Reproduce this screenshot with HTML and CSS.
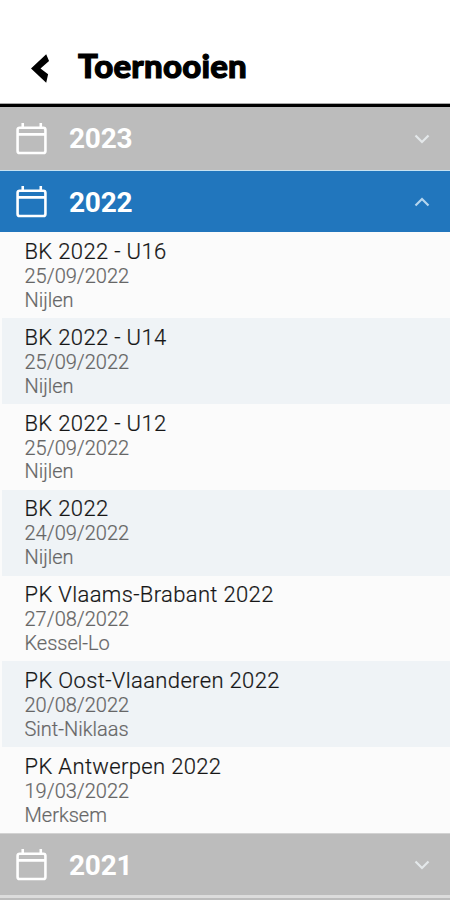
FILE: index.html
```html
<!DOCTYPE html>
<html lang="nl">
<head>
    <meta charset="utf-8">
    <title>Toernooien</title>
    <link rel="stylesheet" href="styles.css">
</head>
<body>
    <svg class="symbols">
        <symbol id="calendar" viewBox="0 0 30 32">
            <path d="M3.500 5.500h23a2 2 0 0 1 2 2V28a2 2 0 0 1-2 2h-23a2 2 0 0 1-2-2V7.500a2 2 0 0 1 2-2zM1.500 12h27M6.500 1v4M24 1v4"/>
        </symbol>
        <symbol id="chevron" viewBox="0 0 16 10">
            <path d="M1.500 1.500L8 8l6.500-6.500"/>
        </symbol>
    </svg>

    <header class="header">
        <svg class="back" viewBox="0 0 20 30"><path d="M16 0L0 15l16 15 2-9-8-6 9-8z"/></svg>
        <h1>Toernooien</h1>
    </header>

    <div class="year">
        <svg class="calendar"><use href="#calendar"/></svg>
        <span>2023</span>
        <svg class="chevron"><use href="#chevron"/></svg>
    </div>

    <div class="year open">
        <svg class="calendar"><use href="#calendar"/></svg>
        <span>2022</span>
        <svg class="chevron"><use href="#chevron"/></svg>
    </div>

    <ul class="list">
        <li>
            <h2>BK 2022 - U16</h2>
            <p>25/09/2022</p>
            <p>Nijlen</p>
        </li>
        <li>
            <h2>BK 2022 - U14</h2>
            <p>25/09/2022</p>
            <p>Nijlen</p>
        </li>
        <li>
            <h2>BK 2022 - U12</h2>
            <p>25/09/2022</p>
            <p>Nijlen</p>
        </li>
        <li>
            <h2>BK 2022</h2>
            <p>24/09/2022</p>
            <p>Nijlen</p>
        </li>
        <li>
            <h2>PK Vlaams-Brabant 2022</h2>
            <p>27/08/2022</p>
            <p>Kessel-Lo</p>
        </li>
        <li>
            <h2>PK Oost-Vlaanderen 2022</h2>
            <p>20/08/2022</p>
            <p>Sint-Niklaas</p>
        </li>
        <li>
            <h2>PK Antwerpen 2022</h2>
            <p>19/03/2022</p>
            <p>Merksem</p>
        </li>
    </ul>

    <div class="year last">
        <svg class="calendar"><use href="#calendar"/></svg>
        <span>2021</span>
        <svg class="chevron"><use href="#chevron"/></svg>
    </div>
</body>
</html>
```
FILE: styles.css
```css
* {
    box-sizing: border-box;
}

body {
    margin: 0;
    height: 900px;
    overflow: hidden;
    background: #bcbcbc;
    font-family: Roboto, sans-serif;
}

.symbols {
    display: none;
}

.header {
    display: flex;
    align-items: center;
    height: 107px;
    padding: 32px 0 0 31px;
    background: #fff;
    border-bottom: 3px solid #000;
    box-shadow: inset 0 -1px 0 #aaa;
}

.header h1 {
    margin: 0 0 7px 28px;
    font-family: Lato, sans-serif;
    font-size: 33px;
    font-weight: 900;
    line-height: 40px;
    letter-spacing: 0.2px;
    -webkit-text-stroke: 1.1px #000;
}

.back {
    width: 19px;
    height: 29px;
}

.year {
    display: flex;
    align-items: center;
    height: 63px;
    padding: 0 20px 0 16px;
    background: #bcbcbc;
    color: #fff;
    font-size: 28px;
    font-weight: 700;
}

.year span {
    flex: 1;
    margin-left: 22px;
    letter-spacing: -0.2px;
}

.year.open {
    background: #2176bd;
    border-top: 1px solid #c5e2f2;
}

.year.last {
    height: 65px;
    padding-top: 2px;
    border-top: 1px solid #d2d2d2;
    border-bottom: 3px solid #dcdcdc;
}

.calendar {
    width: 31px;
    height: 33px;
    margin-bottom: 1px;
    fill: none;
    stroke: #fff;
    stroke-width: 2.5;
}

.chevron {
    width: 16px;
    height: 10px;
    fill: none;
    stroke: #e4e8ea;
    stroke-width: 2.2;
}

.open .chevron {
    stroke: #b5d5ee;
    transform: rotate(180deg);
}

.list {
    margin: -0.6px 0 0;
    padding: 0 0 0 2px;
    list-style: none;
    background: #fbfbfb;
}

.list li {
    height: 85.8px;
    padding: 6.6px 0 0 22.5px;
    background: #fbfbfb;
}

.list li:nth-child(even) {
    background: #eff3f6;
}

.list h2 {
    margin: 0;
    color: #161616;
    font-size: 22px;
    font-weight: 300;
    line-height: 26px;
    letter-spacing: 0.35px;
    -webkit-text-stroke: 0.2px #161616;
}

.list p {
    margin: 0;
    color: #666;
    font-size: 20px;
    font-weight: 300;
    line-height: 23.8px;
    letter-spacing: 0;
    -webkit-text-stroke: 0.2px #666;
}
```
